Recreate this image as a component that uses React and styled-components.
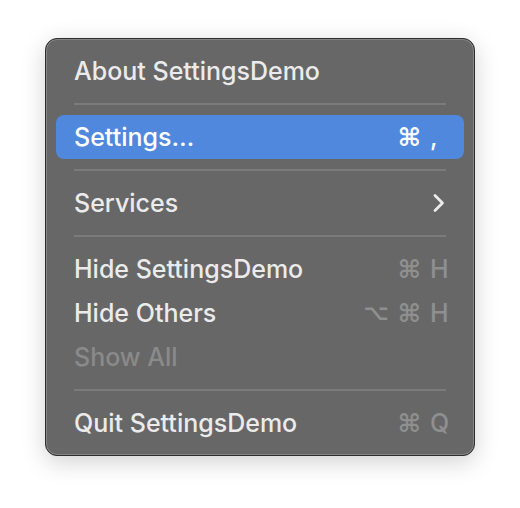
import React from 'react'
import styled, { createGlobalStyle } from 'styled-components'

const GlobalStyle = createGlobalStyle`
  html, body {
    margin: 0;
    padding: 0;
    background: #ffffff;
  }
  body {
    font-family: Inter, "Noto Sans", "DejaVu Sans", sans-serif;
  }
`

const Page = styled.div`
  width: 520px;
  height: 508px;
  padding: 38px 0 0 45px;
  box-sizing: border-box;
`

const Menu = styled.div`
  width: 430px;
  box-sizing: border-box;
  padding: 10px 10px;
  background: #676767;
  border: 1px solid #2e2e2e;
  border-radius: 12px;
  box-shadow: inset 0 0 0 1px #858585, 0 6px 24px rgba(0, 0, 0, 0.18);
  display: flex;
  flex-direction: column;
`

const Item = styled.div`
  height: 44px;
  display: flex;
  align-items: center;
  justify-content: space-between;
  padding: 0 17px 0 18px;
  border-radius: 8px;
  font-size: 25px;
  font-weight: 500;
  color: ${p => (p.$disabled ? '#8a8a8a' : '#ebebeb')};
  background: ${p => (p.$active ? '#5088de' : 'transparent')};
  ${p => p.$active && 'color: #ffffff;'}
`

const Shortcut = styled.span`
  display: flex;
  align-items: center;
  gap: 9px;
  color: ${p => (p.$active ? '#ffffff' : '#8f8f8f')};
  font-size: 25px;
`

const Key = styled.span`
  font-family: "DejaVu Sans", sans-serif;
  font-weight: bold;
  font-size: ${p => (p.$small ? '22px' : '25px')};
  line-height: 1;
`

const Letter = styled.span`
  width: 17px;
  text-align: left;
  font-weight: 500;
`

const Separator = styled.div`
  height: 22px;
  display: flex;
  align-items: center;
  padding: 0 18px;
  &::after {
    content: '';
    flex: 1;
    height: 2px;
    background: #7b7b7b;
  }
`

const Chevron = () => (
  <svg width="16" height="20" viewBox="0 0 16 20">
    <path d="M4 2.5 L11.5 10 L4 17.5" fill="none" stroke="#ebebeb" strokeWidth="2.8" strokeLinecap="round" strokeLinejoin="round" />
  </svg>
)

export default function App() {
  return (
    <Page>
      <GlobalStyle />
      <Menu>
        <Item>About SettingsDemo</Item>
        <Separator />
        <Item $active>
          <span>Settings…</span>
          <Shortcut $active><Key>⌘</Key><Letter>,</Letter></Shortcut>
        </Item>
        <Separator />
        <Item>
          <span>Services</span>
          <Chevron />
        </Item>
        <Separator />
        <Item>
          <span>Hide SettingsDemo</span>
          <Shortcut><Key>⌘</Key><Letter>H</Letter></Shortcut>
        </Item>
        <Item>
          <span>Hide Others</span>
          <Shortcut><Key $small>⌥</Key><Key>⌘</Key><Letter>H</Letter></Shortcut>
        </Item>
        <Item $disabled>Show All</Item>
        <Separator />
        <Item>
          <span>Quit SettingsDemo</span>
          <Shortcut><Key>⌘</Key><Letter>Q</Letter></Shortcut>
        </Item>
      </Menu>
    </Page>
  )
}
